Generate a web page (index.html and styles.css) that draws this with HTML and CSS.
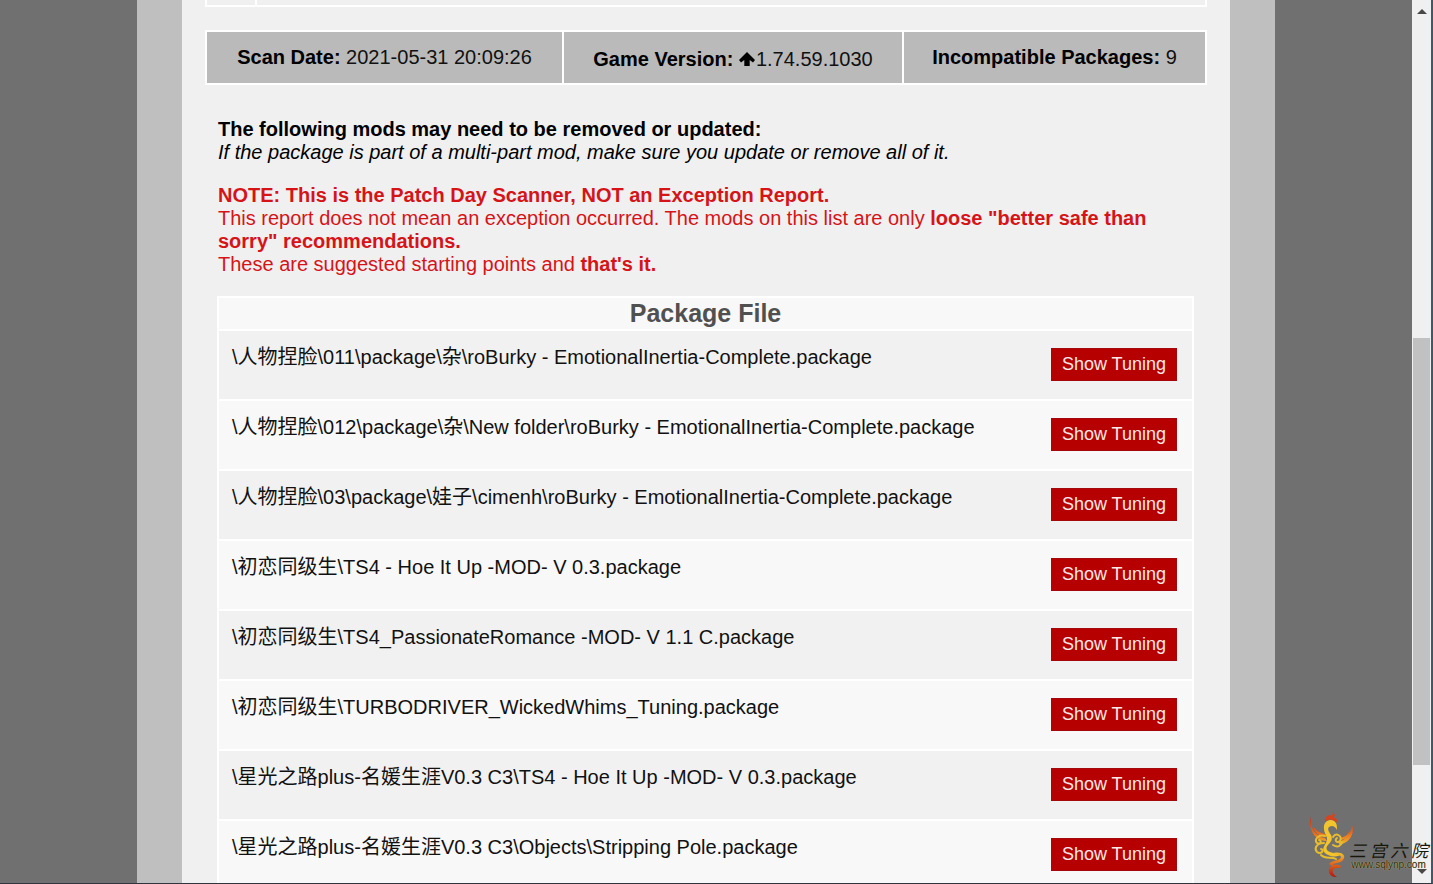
FILE: index.html
```html
<!DOCTYPE html>
<html lang="en">
<head>
<meta charset="utf-8">
<title>Patch Day Scanner</title>
<link rel="stylesheet" href="styles.css">
</head>
<body>
<div class="window">
  <div class="page">
    <main class="report">
      <div class="previous"><div class="previous-label"></div></div>
      <table class="summary">
        <tr>
          <td class="scan-date"><b>Scan Date:</b> 2021-05-31 20:09:26</td>
          <td class="game-version"><b>Game Version:</b> <svg class="arrow" viewBox="0 0 16 15" aria-hidden="true"><path d="M8 0 16 8 14 10.500 10.700 8V14H5.300V8L2 10.500 0 8Z"/></svg>1.74.59.1030</td>
          <td class="incompatible"><b>Incompatible Packages:</b> 9</td>
        </tr>
      </table>
      <section class="content">
        <p><b>The following mods may need to be removed or updated:</b><br><i>If the package is part of a multi-part mod, make sure you update or remove all of it.</i></p>
        <p class="note"><b>NOTE: This is the Patch Day Scanner, NOT an Exception Report.</b><br>This report does not mean an exception occurred. The mods on this list are only <b>loose "better safe than sorry" recommendations.</b><br>These are suggested starting points and <b>that's it.</b></p>
        <table class="packages">
          <thead><tr><th colspan="2">Package File</th></tr></thead>
          <tbody>
            <tr><td class="path" lang="zh">\人物捏脸\011\package\杂\roBurky - EmotionalInertia-Complete.package</td><td class="action"><button type="button">Show Tuning</button></td></tr>
            <tr><td class="path" lang="zh">\人物捏脸\012\package\杂\New folder\roBurky - EmotionalInertia-Complete.package</td><td class="action"><button type="button">Show Tuning</button></td></tr>
            <tr><td class="path" lang="zh">\人物捏脸\03\package\娃子\cimenh\roBurky - EmotionalInertia-Complete.package</td><td class="action"><button type="button">Show Tuning</button></td></tr>
            <tr><td class="path" lang="zh">\初恋同级生\TS4 - Hoe It Up -MOD- V 0.3.package</td><td class="action"><button type="button">Show Tuning</button></td></tr>
            <tr><td class="path" lang="zh">\初恋同级生\TS4_PassionateRomance -MOD- V 1.1 C.package</td><td class="action"><button type="button">Show Tuning</button></td></tr>
            <tr><td class="path" lang="zh">\初恋同级生\TURBODRIVER_WickedWhims_Tuning.package</td><td class="action"><button type="button">Show Tuning</button></td></tr>
            <tr><td class="path" lang="zh">\星光之路plus-名媛生涯V0.3 C3\TS4 - Hoe It Up -MOD- V 0.3.package</td><td class="action"><button type="button">Show Tuning</button></td></tr>
            <tr><td class="path" lang="zh">\星光之路plus-名媛生涯V0.3 C3\Objects\Stripping Pole.package</td><td class="action"><button type="button">Show Tuning</button></td></tr>
          </tbody>
        </table>
      </section>
    </main>
  </div>
  <div class="scrollbar">
    <svg class="scroll-arrow" viewBox="0 0 10 5" aria-hidden="true"><path d="M5 0 10 5H0Z"/></svg>
    <div class="track"><div class="thumb"></div></div>
    <svg class="scroll-arrow" viewBox="0 0 10 5" aria-hidden="true"><path d="M0 0H10L5 5Z"/></svg>
  </div>
  <div class="watermark">
    <svg class="phoenix" viewBox="0 0 46 68" aria-hidden="true">
      <defs>
        <linearGradient id="wing" x1="0" y1="0" x2="0" y2="1"><stop offset="0" stop-color="#b8321c"/><stop offset=".55" stop-color="#e8641c"/><stop offset="1" stop-color="#f3b72a"/></linearGradient>
        <linearGradient id="tail" x1="0" y1="0" x2="0" y2="1"><stop offset="0" stop-color="#f0c42c"/><stop offset=".5" stop-color="#e2601c"/><stop offset="1" stop-color="#b5150e"/></linearGradient>
      </defs>
      <path fill="url(#wing)" d="M2 4C1 15 5 24 16 26L18 29C6 29-2 17 2 4ZM4 14C8 20 12 21 16 22L17 25C9 24 5 20 4 14ZM43 13C46 22 41 30 31 33L29 30C37 28 42 22 43 13ZM41 18C39 23 36 25 31 26L32 28C37 27 40 24 41 18Z"/>
      <path fill="#d9431b" d="M16 10C16 5 19 2 23 4L24 0 26 3 24 6C28 5 29 9 27 11 25 7 20 6 16 10Z"/>
      <path fill="#f3c52c" d="M15 17C14 10 20 6 25 9 28 11 28 14 28 18 26 14 23 13 20 15 18 17 20 20 22 23 24 27 22 30 19 33 16 36 18 39 21 40 25 42 29 41 33 42 29 46 19 45 15 40 12 35 19 31 18 26 17 23 15 20 15 17Z"/>
      <g fill="none" stroke="#e7bd2d" stroke-width="2" stroke-linecap="round">
        <path d="M16 24C9 22 5 28 8 31 12 33 13 28 10 28M15 31C7 31 5 37 8 40 12 43 16 38 12 37M24 25C27 20 34 24 31 29 28 32 25 28 28 26M24 33C29 36 32 34 33 30M12 43C17 48 22 44 27 47"/>
      </g>
      <path fill="url(#tail)" d="M23 41C32 39 38 43 34 48 31 52 26 50 24 53 29 52 34 53 31 56L27 56C22 57 23 62 28 65 20 66 17 57 23 54L20 52C23 48 31 49 32 45 31 42 27 43 23 41Z"/>
    </svg>
    <div class="brand"><span class="brand-name" lang="zh">三宫六院</span><span class="brand-url">www.sqlynp.com</span></div>
  </div>
</div>
</body>
</html>
```
FILE: styles.css
```css
* { box-sizing: border-box; }
body {
  margin: 0;
  font: 20px/23px "Liberation Sans", Arial, "Noto Sans CJK SC", sans-serif;
  color: #111;
}
.window {
  position: relative;
  display: flex;
  height: 100vh;
  overflow: hidden;
  background: #707070;
  border-right: 2px solid #405968;
  border-bottom: 1px solid #30343c;
}
.page {
  flex: 1;
  margin: 0 137px;
  padding: 0 45px;
  background: #bfbfbf;
}
.report {
  min-height: 100%;
  padding: 0 23px;
  background: #f0f0f0;
}
.previous {
  height: 7px;
  margin-bottom: 23px;
  border: 2px solid #fff;
  border-top: 0;
}
.previous-label {
  width: 50px;
  height: 5px;
  border-right: 2px solid #fff;
}
table {
  width: 100%;
  border-collapse: collapse;
}
.summary td {
  height: 53px;
  padding: 0;
  border: 2px solid #fff;
  background: #bababa;
  text-align: center;
  white-space: nowrap;
}
.summary b { color: #000; }
.summary .scan-date { width: 357px; }
.summary .game-version { width: 340px; padding-top: 4px; }
.summary .incompatible { width: 303px; }
.arrow {
  width: 16px;
  height: 15px;
  margin-right: 1px;
  vertical-align: -1px;
}
.content { padding: 33px 13px 0 12px; }
.content p { margin: 0 0 20px 1px; color: #000; }
.content .note { color: #d61418; }
.packages th {
  height: 33px;
  padding: 0;
  border: 2px solid #fff;
  background: #f8f8f8;
  color: #505050;
  font-size: 25px;
  line-height: 29px;
}
.packages tbody tr {
  background: #f8f8f8;
  border: 2px solid #fff;
}
.packages tbody tr:nth-child(odd) { background: #f1f1f1; }
.packages td {
  height: 70px;
  vertical-align: top;
}
.packages .path { padding: 15px 0 0 13px; }
.packages .action {
  padding: 17px 15px 0 0;
  text-align: right;
  white-space: nowrap;
}
.packages button {
  display: inline-block;
  height: 33px;
  padding: 0 10px 2px;
  border: 1px solid #a4080c;
  background: #b60000;
  color: #fbe9e9;
  font: 18px/20px "Liberation Sans", Arial, sans-serif;
}
.scrollbar {
  display: flex;
  flex-direction: column;
  align-items: center;
  width: 19px;
  padding: 9px 0;
  background: #f0f0f0;
}
.scroll-arrow { width: 10px; height: 5px; fill: #484848; }
.track { flex: 1; width: 17px; padding: 324px 0 104px; }
.thumb { height: 100%; background: #c1c1c1; }
.watermark {
  position: absolute;
  right: 3px;
  bottom: 3px;
  display: flex;
  align-items: flex-end;
}
.phoenix { width: 46px; height: 68px; margin-right: -6px; }
.brand {
  display: flex;
  flex-direction: column;
  width: 79px;
  padding-bottom: 10px;
  color: #17160c;
}
.brand-name {
  font: italic 17px/20px "Noto Sans CJK SC", sans-serif;
  text-align-last: justify;
}
.brand-url {
  color: #292711;
  font: 10px/10px "Liberation Sans", Arial, sans-serif;
  text-align-last: center;
  text-shadow: 0 0 1px #e5db75;
}
```
